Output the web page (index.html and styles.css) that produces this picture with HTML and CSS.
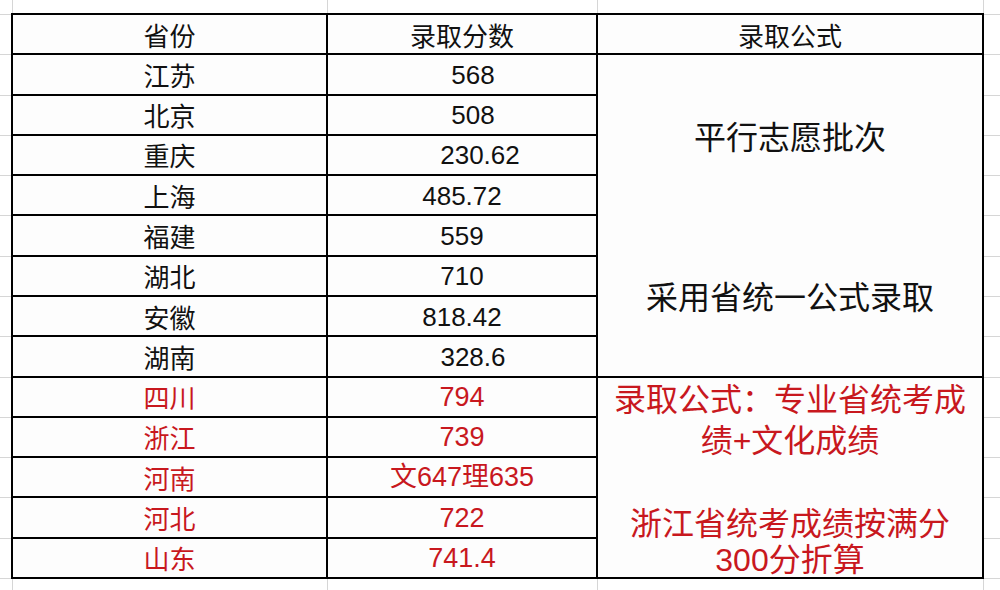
FILE: index.html
```html
<!DOCTYPE html>
<html lang="zh-CN">
<head>
<meta charset="utf-8">
<title>录取分数</title>
<link rel="stylesheet" href="styles.css">
</head>
<body>
<div class="sheet">
  <div class="table">
    <div class="cell head">省份</div>
    <div class="cell head">录取分数</div>
    <div class="cell head">录取公式</div>

    <div class="cell">江苏</div>
    <div class="cell num shift-s">568</div>
    <div class="cell formula">
      <span class="f-line">平行志愿批次</span>
      <span class="f-line">采用省统一公式录取</span>
    </div>

    <div class="cell">北京</div>
    <div class="cell num shift-s">508</div>
    <div class="cell">重庆</div>
    <div class="cell num shift-l">230.62</div>
    <div class="cell">上海</div>
    <div class="cell num">485.72</div>
    <div class="cell">福建</div>
    <div class="cell num">559</div>
    <div class="cell">湖北</div>
    <div class="cell num">710</div>
    <div class="cell">安徽</div>
    <div class="cell num">818.42</div>
    <div class="cell">湖南</div>
    <div class="cell num shift-s">328.6</div>

    <div class="cell red">四川</div>
    <div class="cell num red">794</div>
    <div class="cell red note">
      <p class="note-a">录取公式：专业省统考成<br>绩+文化成绩</p>
      <p class="note-b">浙江省统考成绩按满分<br>300分折算</p>
    </div>

    <div class="cell red">浙江</div>
    <div class="cell num red">739</div>
    <div class="cell red">河南</div>
    <div class="cell num red">文647理635</div>
    <div class="cell red">河北</div>
    <div class="cell num red">722</div>
    <div class="cell red">山东</div>
    <div class="cell num red">741.4</div>
  </div>
</div>
</body>
</html>
```

FILE: styles.css
```css
html, body {
  margin: 0;
  padding: 0;
}

body {
  width: 1000px;
  height: 590px;
  overflow: hidden;
  font-family: "Liberation Sans", "Noto Sans CJK SC", sans-serif;
  color: #111;
  background:
    linear-gradient(#d6d6d6, #d6d6d6) 12px 0 / 1px 100% no-repeat,
    linear-gradient(#d6d6d6, #d6d6d6) 327px 0 / 1px 100% no-repeat,
    linear-gradient(#d6d6d6, #d6d6d6) 597px 0 / 1px 100% no-repeat,
    linear-gradient(#d6d6d6, #d6d6d6) 983px 0 / 1px 100% no-repeat,
    repeating-linear-gradient(#d6d6d6 0 1px, transparent 1px 40.2857px) 0 14px / 100% 576px no-repeat,
    #ffffff;
}

.sheet {
  padding: 13px 0 0 11px;
}

.table {
  display: grid;
  grid-template-columns: 313px 268px 384px;
  grid-template-rows: repeat(14, 1fr);
  gap: 2px;
  padding: 2px;
  width: 969px;
  height: 562px;
  background: #000;
}

.cell {
  background: #fdfdfd;
  display: flex;
  align-items: center;
  justify-content: center;
  font-size: 26px;
  line-height: 1;
  padding-top: 5px;
  box-sizing: border-box;
}

.num {
  padding-top: 1px;
}

.num.red {
  font-size: 27px;
}

.shift-s {
  padding-left: 22px;
}

.shift-l {
  padding-left: 36px;
}

.red {
  color: #c8181e;
}

.formula {
  grid-row: span 8;
  flex-direction: column;
  justify-content: flex-start;
  padding-top: 66px;
  gap: 126px;
}

.f-line {
  font-size: 32px;
  line-height: 34px;
}

.note {
  grid-row: span 5;
  flex-direction: column;
  justify-content: flex-start;
  padding-top: 2px;
  text-align: center;
}

.note p {
  margin: 0;
  font-size: 32px;
}

.note-a {
  line-height: 41px;
}

.note-b {
  margin-top: 44px !important;
  line-height: 36px;
}
```
